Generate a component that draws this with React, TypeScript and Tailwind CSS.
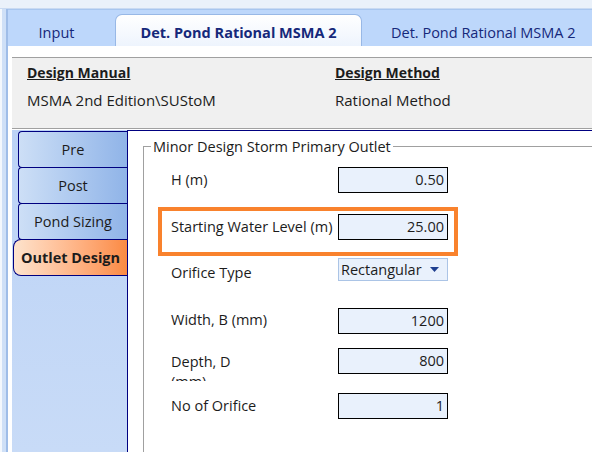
import React from 'react';

const sideTabs = [
    { label: 'Pre', active: false },
    { label: 'Post', active: false },
    { label: 'Pond Sizing', active: false },
    { label: 'Outlet Design', active: true },
];

const NumBox: React.FC<{ value: string }> = ({ value }) => (
    <div className="w-[110px] h-[26px] shrink-0 border border-black bg-[#e9f1fc] flex items-center justify-end pr-[3px] text-[14.5px] text-[#1c1c1c]">
        {value}
    </div>
);

const App: React.FC = () => {
    return (
        <div
            className="w-[592px] h-[452px] overflow-hidden bg-[#eaf1fa] flex flex-col"
            style={{ fontFamily: '"Open Sans", "Noto Sans", sans-serif' }}
        >
            {/* top strip */}
            <div className="h-[9px] border-b border-[#c9daf2] shrink-0" />

            <div className="flex flex-1 min-h-0">
                {/* left frame edge */}
                <div className="w-[8px] shrink-0 flex">
                    <div className="w-[2px] bg-[#f4f8fd]" />
                    <div className="w-[4px] bg-[#cfe0f7]" />
                    <div className="w-[2px] bg-[#9fbde8]" />
                </div>

                <div className="flex-1 flex flex-col min-w-0">
                    {/* main tabs */}
                    <div className="h-[37px] bg-[#bdd7fb] flex items-end shrink-0 border-t border-[#a8c6ef]">
                        <div className="w-[107px] h-[31px] flex items-center justify-center pr-[10px] pt-[4px] text-[14.5px] text-[#15287a]">
                            Input
                        </div>
                        <div className="w-[247px] h-[32px] rounded-t-[7px] border border-b-0 border-[#98b8e6] bg-gradient-to-b from-white to-[#eef4fd] flex items-center justify-center pt-[4px] text-[14.5px] font-bold text-[#15287a] whitespace-nowrap">
                            Det. Pond Rational MSMA 2
                        </div>
                        <div className="flex-1 h-[31px] flex items-center pl-[29px] pt-[4px] text-[14.5px] text-[#15287a] whitespace-nowrap">
                            Det. Pond Rational MSMA 2
                        </div>
                    </div>

                    {/* page body */}
                    <div className="flex-1 bg-white pt-[11px] pl-[4px] flex flex-col min-h-0">
                        {/* design header */}
                        <div className="h-[72px] bg-[#f0f0f0] border-y border-[#a0a0a0] flex text-[15px] text-[#1c1c1c] shrink-0">
                            <div className="w-[323px] pl-[15px] pt-[4px]">
                                <div className="font-bold underline text-[14px]">Design Manual</div>
                                <div className="mt-[6px]">MSMA 2nd Edition\SUStoM</div>
                            </div>
                            <div className="pt-[4px]">
                                <div className="font-bold underline text-[14px]">Design Method</div>
                                <div className="mt-[6px]">Rational Method</div>
                            </div>
                        </div>

                        <div className="flex flex-1 min-h-0 mt-[1px]">
                            {/* side tabs */}
                            <div className="w-[116px] shrink-0 bg-gradient-to-b from-[#bcd3f6] to-[#c8dbf7] border-r border-[#000080] flex flex-col pt-[1px]">
                                {sideTabs.map(tab => (
                                    <div
                                        key={tab.label}
                                        className={`h-[37px] flex items-center justify-center text-[14.5px] border border-r-0 border-[#000080] -mb-px ${
                                            tab.active
                                                ? 'ml-[1px] rounded-l-[8px] font-bold bg-gradient-to-r from-[#fde3cd] to-[#fb8a42] text-[#1c1c1c]'
                                                : 'ml-[6px] rounded-l-[4px] bg-gradient-to-r from-[#cddff6] to-[#90b4e8] text-[#1c1c1c]'
                                        }`}
                                    >
                                        {tab.label}
                                    </div>
                                ))}
                            </div>

                            {/* content */}
                            <div className="flex-1 bg-white border-t border-[#000080] pl-[15px] pt-[15px] min-w-0">
                                <div className="relative border-l border-t border-[#a0a0a0] h-[330px]">
                                    <div className="absolute -top-[11px] left-[7px] bg-white px-[2px] text-[14.5px] text-[#1c1c1c] whitespace-nowrap">
                                        Minor Design Storm Primary Outlet
                                    </div>

                                    <div className="pl-[14px] pt-[20px] text-[14.5px] text-[#1c1c1c] flex flex-col">
                                        {/* H */}
                                        <div className="flex items-center w-[300px] pl-[13px] pr-[10px]">
                                            <div className="flex-1">H (m)</div>
                                            <NumBox value="0.50" />
                                        </div>

                                        {/* starting water level */}
                                        <div className="mt-[14px] w-[300px] h-[49px] border-[4px] border-[#f9822d] flex items-start pt-[3px] pl-[9px] pr-[6px]">
                                            <div className="flex-1 leading-[26px]">Starting Water Level (m)</div>
                                            <NumBox value="25.00" />
                                        </div>

                                        {/* orifice type */}
                                        <div className="mt-[2px] flex items-start w-[300px] pl-[13px] pr-[10px]">
                                            <div className="flex-1 pt-[4px] leading-[22px]">Orifice Type</div>
                                            <div className="w-[110px] h-[23px] border border-[#abc4e6] bg-[#e9f1fc] flex items-center pl-[2px] pr-[8px]">
                                                <span className="flex-1">Rectangular</span>
                                                <svg width="9" height="5" viewBox="0 0 9 5">
                                                    <path d="M0 0 H9 L4.5 5 Z" fill="#1f3f8f" />
                                                </svg>
                                            </div>
                                        </div>

                                        {/* width */}
                                        <div className="mt-[24px] flex items-center w-[300px] pl-[13px] pr-[10px]">
                                            <div className="flex-1 pb-[3px]">Width, B (mm)</div>
                                            <NumBox value="1200" />
                                        </div>

                                        {/* depth: label wraps and its second line is clipped, as in the app */}
                                        <div className="mt-[14px] flex items-start w-[300px] pl-[13px] pr-[10px]">
                                            <div className="flex-1 h-[26px]">
                                                <div className="w-[80px] h-[33px] overflow-hidden pt-[4px] leading-[20px]">
                                                    Depth, D (mm)
                                                </div>
                                            </div>
                                            <NumBox value="800" />
                                        </div>

                                        {/* no of orifice */}
                                        <div className="mt-[19px] flex items-center w-[300px] pl-[13px] pr-[10px]">
                                            <div className="flex-1">No of Orifice</div>
                                            <NumBox value="1" />
                                        </div>
                                    </div>
                                </div>
                            </div>
                        </div>
                    </div>
                </div>
            </div>
        </div>
    );
};

export default App;
